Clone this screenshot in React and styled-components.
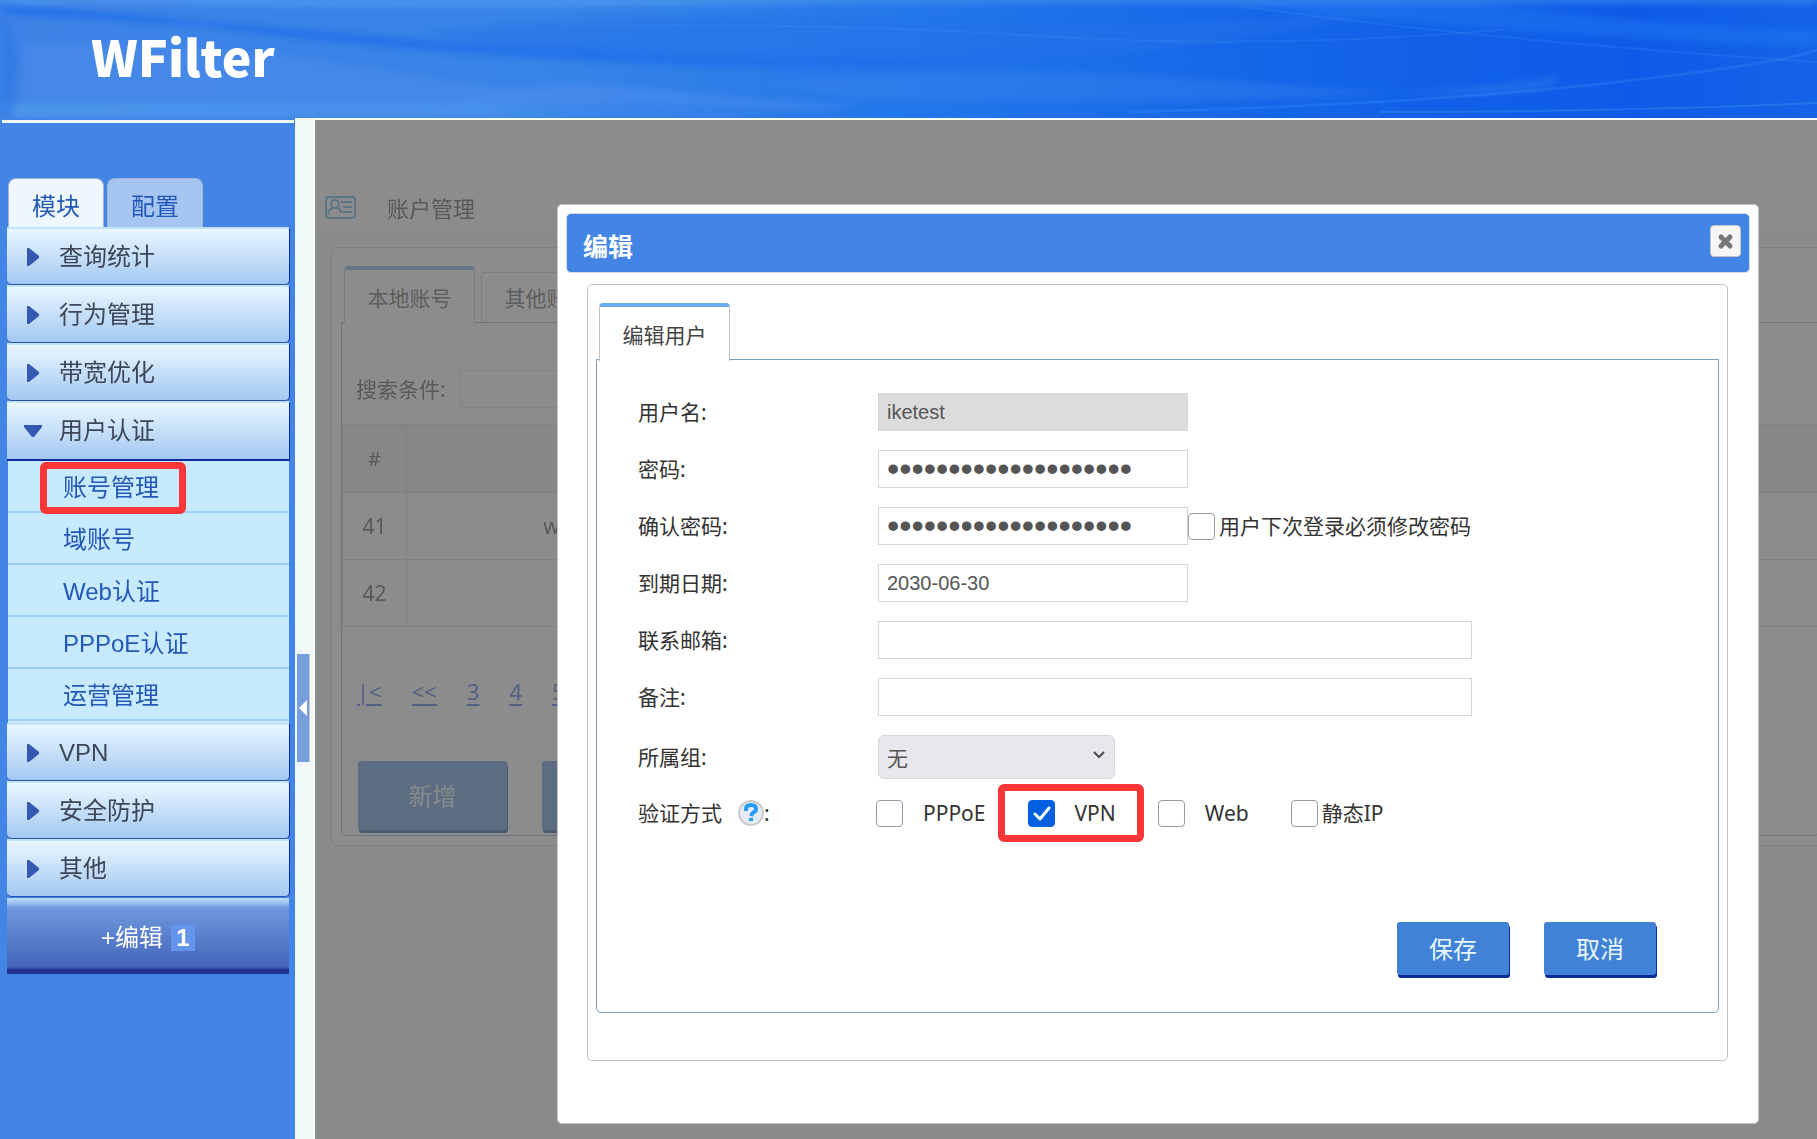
import { useState } from "react";
import styled, { createGlobalStyle } from "styled-components";

const GlobalStyle = createGlobalStyle`
    * {
        box-sizing: border-box;
    }
    body {
        margin: 0;
        background-color: #ffffff;
        color: #333333;
        font-family: "Noto Sans", "Noto Sans CJK SC", sans-serif;
        font-size: 21px;
        line-height: 30px;
    }
    button, input, select {
        margin: 0;
        font-family: inherit;
    }
`;

const Page = styled.div`
    display: flex;
    flex-direction: column;
    min-height: 100vh;
`;

const Header = styled.header`
    display: grid;
    height: 118px;
    > * {
        grid-area: 1 / 1;
    }
`;

const HeaderArt = styled.svg`
    display: block;
    width: 100%;
    height: 118px;
`;

const Logo = styled.h1`
    margin: 0;
    padding: 23px 0 0 91px;
    color: #ffffff;
    font-family: "Noto Sans CJK SC", sans-serif;
    font-size: 50px;
    font-weight: 900;
    line-height: 64px;
`;

const Body = styled.div`
    display: flex;
    flex: 1;
`;

const Sidebar = styled.aside`
    flex: none;
    width: 295px;
    padding-top: 2px;
    background-color: #4285e4;
`;

const SidebarRule = styled.div`
    height: 3px;
    margin: 0 1px 55px 2px;
    background-color: #f0faf8;
`;

const SideTabs = styled.div`
    display: flex;
    gap: 3px;
    padding-left: 8px;
`;

const SideTab = styled.button`
    width: 96px;
    height: 49px;
    padding: 6px 0 0;
    border: 1px solid #a3b6d6;
    border-bottom: 0;
    border-radius: 8px 8px 0 0;
    background-color: ${({ $active }) => ($active ? "#eef6fe" : "#a6c6f1")};
    color: #2458b8;
    font-size: 24px;
    line-height: 36px;
`;

const Menu = styled.nav`
    width: 283px;
    margin-left: 7px;
    font-family: "Liberation Sans", "Noto Sans CJK SC", sans-serif;
`;

const MenuItem = styled.button`
    display: grid;
    grid-template-columns: 36px 1fr;
    align-items: center;
    width: 100%;
    height: ${({ $open }) => ($open ? 60 : 58)}px;
    padding: 0 0 0 16px;
    border: 0;
    border-top: 2px solid #c2e3fc;
    border-right: 1px solid #0b2c9a;
    border-bottom: ${({ $open }) => ($open ? "2px solid #0b2c9a" : "1px solid #2c50b0")};
    border-radius: ${({ $open }) => ($open ? "0" : "0 3px 5px 5px")};
    background: linear-gradient(#e9f7ff, #a3c8f2);
    color: #3d4757;
    font-size: 24px;
    line-height: 36px;
    text-align: left;
`;

const SubMenu = styled.ul`
    margin: 0 1px;
    padding: 0 0 2px;
    list-style: none;
    background-color: #c8eaff;
`;

const SubItem = styled.li`
    position: relative;
    height: 52px;
    border-bottom: 2px solid #a0d0f8;
`;

const SubLink = styled.a`
    display: block;
    padding-left: 55px;
    color: #2458b8;
    font-size: 24px;
    line-height: 54px;
    text-decoration: none;
`;

/* red frame lying over the part it points at */
const Marker = styled.span`
    position: absolute;
    inset: ${({ $inset }) => $inset};
    border: 7px solid #fc3636;
    border-radius: 6px;
    pointer-events: none;
`;

const EditMenu = styled.button`
    display: flex;
    align-items: center;
    justify-content: center;
    gap: 8px;
    width: 282px;
    height: 76px;
    margin-top: 1px;
    padding: 4px 0 0;
    border: 0;
    background: linear-gradient(#b9d9f5 0, #a5c9f0 4px, #6f99de 10px, #4364b8 69px, #22308f 72px, #22308f 100%);
    color: #ffffff;
    font-size: 24px;
    line-height: 26px;
`;

const Badge = styled.span`
    width: 24px;
    background-color: #6495ed;
    font-weight: 700;
`;

const Splitter = styled.div`
    flex: none;
    width: 20px;
    padding: 536px 0 0 2px;
    border-right: 1px solid #ffffff;
    background-color: #f0f9f7;
`;

const Collapse = styled.button`
    display: grid;
    place-items: center;
    width: 13px;
    height: 108px;
    padding: 0;
    border: 0;
    border-right: 1px solid #c4c4c8;
    background-color: #779fdc;
`;

const Main = styled.main`
    position: relative;
    flex: 1;
    min-width: 0;
    margin-top: 2px;
    overflow: hidden;
    background-color: #f0f9f7;
`;

const PageTitle = styled.h2`
    display: flex;
    align-items: center;
    gap: 31px;
    height: 111px;
    margin: 0;
    padding: 64px 0 0 10px;
    background-color: #ffffff;
    font-size: 22px;
    font-weight: 400;
`;

const Card = styled.section`
    margin: 16px -12px 0 16px;
    padding: 18px 9px 9px;
    border: 1px solid #cccccc;
    border-radius: 6px;
    background-color: #ffffff;
`;

const Tabs = styled.div`
    display: flex;
    align-items: flex-end;
    gap: 6px;
    padding-left: 3px;
`;

const Tab = styled.button`
    position: relative;
    width: 131px;
    height: ${({ $active }) => ($active ? 58 : 50)}px;
    margin-bottom: ${({ $active }) => ($active ? -2 : 0)}px;
    padding: ${({ $active }) => ($active ? "2px" : "0")} 0 0;
    border: 1px solid #c3c3c3;
    border-top: ${({ $active }) => ($active ? "4px solid #6aabf5" : "1px solid #c3c3c3")};
    border-bottom: 0;
    border-radius: 4px 4px 0 0;
    background-color: #ffffff;
    color: #444444;
    font-size: 21px;
    line-height: 30px;
`;

const Panel = styled.div`
    border: 1px solid #76a2c6;
    border-radius: 0 0 5px 5px;
`;

const SearchRow = styled.div`
    display: flex;
    align-items: center;
    gap: 14px;
    padding: 47px 14px 16px;
`;

const Input = styled.input`
    width: ${({ $wide }) => ($wide ? 594 : 310)}px;
    height: 38px;
    padding: 0 8px;
    border: 1px solid #d5d6d7;
    border-radius: 0;
    background-color: #ffffff;
    color: #555555;
    font-family: "Liberation Sans", "Noto Sans CJK SC", sans-serif;
    font-size: 20px;
    &:disabled {
        background-color: #dcdcdc;
    }
    &[type="password"] {
        font-size: 35px;
    }
`;

const Table = styled.table`
    width: 100%;
    border-collapse: collapse;
    table-layout: fixed;
    th, td {
        height: 67px;
        padding: 0;
        border: 1px solid #d4d4d4;
        font-weight: 400;
        text-align: center;
    }
    th {
        height: 68px;
        background-color: #ececec;
        font-size: 20px;
    }
    col:nth-child(1) {
        width: 64px;
    }
    col:nth-child(2) {
        width: 290px;
    }
`;

const Pager = styled.div`
    display: flex;
    gap: 30px;
    padding: 48px 15px 54px;
    a {
        color: #1450dc;
        font-size: 22px;
        line-height: 32px;
        text-underline-offset: 4px;
    }
`;

const ListActions = styled.div`
    display: flex;
    gap: 35px;
    padding: 0 16px 5px;
`;

const Button = styled.button`
    width: ${({ $large }) => ($large ? 149 : 112)}px;
    height: ${({ $large }) => ($large ? 69 : 53)}px;
    padding: 0;
    border: 0;
    border-radius: 3px;
    background-color: #4182d6;
    box-shadow: 1px 3px 0 #0a2c98;
    color: #e8f8ff;
    font-size: 24px;
    line-height: 36px;
`;

const Overlay = styled.div`
    position: absolute;
    inset: 0;
    background-color: rgba(102, 102, 102, 0.75);
`;

const Dialog = styled.div`
    position: absolute;
    top: 84px;
    left: 242px;
    right: 58px;
    padding: 8px 8px 62px;
    border: 1px solid #c3c3c3;
    border-radius: 5px;
    background-color: #ffffff;
`;

const DialogBar = styled.div`
    display: flex;
    align-items: center;
    justify-content: space-between;
    height: 60px;
    padding: 0 8px 0 16px;
    border: 1px solid #d2dcea;
    border-radius: 5px;
    background-color: #4285e4;
`;

const DialogTitle = styled.h3`
    margin: 0;
    padding-top: 6px;
    color: #ffffff;
    font-size: 25px;
    line-height: 36px;
`;

const Close = styled.button`
    display: grid;
    place-items: center;
    width: 31px;
    height: 32px;
    margin-bottom: 4px;
    padding: 0;
    border: 1px solid #c5c5c5;
    border-radius: 4px;
    background-color: #f6f6f6;
`;

const Group = styled.div`
    margin: 11px 22px 0 21px;
    padding: 18px 8px 47px;
    border: 1px solid #c3c3c3;
    border-radius: 5px;
`;

const Form = styled.form`
    display: flex;
    flex-direction: column;
    gap: 19px;
    padding: 33px 62px 37px 41px;
`;

const Row = styled.div`
    display: grid;
    grid-template-columns: 240px 1fr;
    align-items: center;
`;

const Field = styled.div`
    display: flex;
    align-items: center;
`;

const RowLabel = styled.span`
    display: flex;
    align-items: center;
    gap: ${({ $gap }) => $gap || 0}px;
`;

const SelectBox = styled.div`
    position: relative;
    width: 237px;
    svg {
        position: absolute;
        top: 15px;
        right: 9px;
        pointer-events: none;
    }
`;

const Select = styled.select`
    appearance: none;
    display: block;
    width: 100%;
    height: 44px;
    padding: 2px 8px 0;
    border: 1px solid #d6d6d8;
    border-radius: 6px;
    background-color: #e8e7ec;
    color: #555555;
    font-size: 21px;
    line-height: 30px;
`;

const Choices = styled.div`
    display: flex;
    gap: 42px;
    margin-left: -2px;
`;

const Choice = styled.label`
    position: relative;
    display: flex;
    align-items: center;
    gap: ${({ $tight }) => ($tight ? 4 : 20)}px;
`;

const TickBox = styled.span`
    display: grid;
    width: 27px;
    height: 27px;
    > * {
        grid-area: 1 / 1;
    }
    svg {
        pointer-events: none;
    }
    input {
        appearance: none;
        width: 27px;
        height: 27px;
        border: 1px solid #9b9aa8;
        border-radius: 4px;
        background-color: #ffffff;
    }
    input:checked {
        border-color: #0060df;
        background-color: #0060df;
    }
`;

const FormActions = styled.div`
    display: flex;
    justify-content: flex-end;
    gap: 35px;
    padding-top: 75px;
`;

const menu = [
    { name: "查询统计" },
    { name: "行为管理" },
    { name: "带宽优化" },
    { name: "用户认证", children: ["账号管理", "域账号", "Web认证", "PPPoE认证", "运营管理"] },
    { name: "VPN" },
    { name: "安全防护" },
    { name: "其他" },
];

const fields = [
    { id: "username", label: "用户名", value: "iketest", disabled: true },
    { id: "password", label: "密码", value: "12345678901234567890", type: "password" },
    { id: "confirm", label: "确认密码", value: "12345678901234567890", type: "password", mustChange: true },
    { id: "expire", label: "到期日期", value: "2030-06-30" },
    { id: "email", label: "联系邮箱", wide: true },
    { id: "memo", label: "备注", wide: true },
];

const Arrow = ({ open }) => (
    <svg width="20" height="20" viewBox="0 0 20 20">
        {open ? <path d="M1 4h18v2l-8 10H9L1 6z" fill="#3558b2" /> : <path d="M4 1h2l10 8v2L6 19H4z" fill="#3558b2" />}
    </svg>
);

const HeaderBackground = () => (
    <HeaderArt viewBox="0 0 1817 118" preserveAspectRatio="none" aria-hidden="true">
        <defs>
            <linearGradient id="sky">
                <stop offset="0" stopColor="#3f83e6" />
                <stop offset="0.3" stopColor="#3784e7" />
                <stop offset="0.5" stopColor="#2478ea" />
                <stop offset="0.7" stopColor="#1466e8" />
                <stop offset="0.9" stopColor="#0d5be8" />
                <stop offset="1" stopColor="#1464e8" />
            </linearGradient>
            <linearGradient id="edge">
                <stop offset="0" stopColor="#4c95ea" />
                <stop offset="0.45" stopColor="#4790ea" />
                <stop offset="0.75" stopColor="#1a70ea" stopOpacity="0.2" />
                <stop offset="1" stopColor="#1a70ea" stopOpacity="0" />
            </linearGradient>
            <filter id="soft" x="-5%" y="-40%" width="110%" height="180%">
                <feGaussianBlur stdDeviation="3" />
            </filter>
        </defs>
        <rect width="1817" height="118" fill="url(#sky)" />
        <g filter="url(#soft)">
            <path d="M0 0H900Q500 14 60 2L0 12z" fill="#4a96ec" opacity="0.7" />
            <path d="M0 2Q200 22 380 36T760 56Q980 60 1200 34L1200 44Q980 76 700 66Q420 56 200 26L0 14z" fill="#1c6cea" opacity="0.7" />
            <path d="M420 34Q640 10 900 20T1400 8Q1200 60 900 62T600 54z" fill="#1f72ea" opacity="0.5" />
            <path d="M24 44Q200 40 330 62T640 104L400 103H20z" fill="#4889e8" opacity="0.8" />
            <path d="M450 102Q540 76 640 88T860 106L700 118H430z" fill="#4a8cec" opacity="0.7" />
            <path d="M0 103H700Q900 108 1080 118H0z" fill="url(#edge)" />
            <path d="M760 84Q1000 60 1280 84T1560 76Q1300 112 860 98z" fill="#3a86ee" opacity="0.35" />
            <path d="M1180 0H1460Q1640 26 1817 30V46Q1560 40 1180 0z" fill="#2f84f2" opacity="0.35" />
            <path d="M0 14L8 20Q24 40 12 118H0z" fill="#2e77e2" opacity="0.6" />
            <rect y="-2" width="1817" height="5" fill="#579ff0" opacity="0.6" />
        </g>
        <g fill="none" strokeLinecap="round">
            <path d="M560 26Q820 22 1040 36T1500 30" stroke="#3f8cf0" strokeWidth="2" opacity="0.25" />
            <path d="M1130 112Q1420 104 1600 84T1817 50" stroke="#3f95f6" strokeWidth="3" opacity="0.25" />
            <path d="M1240 6Q1480 40 1817 62" stroke="#3b8df5" strokeWidth="2" opacity="0.25" />
            <path d="M1380 112Q1620 112 1817 103" stroke="#3b9cf2" strokeWidth="2" opacity="0.35" />
        </g>
    </HeaderArt>
);

const CardIcon = () => (
    <svg width="31" height="23" viewBox="0 0 31 23" fill="none" stroke="#3fa3d6" strokeWidth="2">
        <rect x="1" y="1" width="29" height="21" rx="3" />
        <circle cx="10" cy="8" r="4" />
        <path d="M3 18q1-5 5-6M12 12q4 1 4 5M16 6h11M18 11h9M18 16h9" />
    </svg>
);

const HelpIcon = () => (
    <svg width="26" height="26" viewBox="0 0 26 26">
        <circle cx="13" cy="13" r="12" fill="#e6ebf3" stroke="#c9cbcf" strokeWidth="2" />
        <path d="M8 11V9q0-4 5-4t5 4q0 2-2 3t-3 4" fill="none" stroke="#259df4" strokeWidth="4" />
        <rect x="11" y="18" width="4" height="3" fill="#259df4" />
    </svg>
);

const Tick = ({ label, tight, checked, marked }) => {
    const [on, setOn] = useState(!!checked);
    return (
        <Choice $tight={tight}>
            <TickBox>
                <input type="checkbox" checked={on} onChange={() => setOn(!on)} />
                {on ? (
                    <svg width="27" height="27" viewBox="0 0 27 27" fill="none" stroke="#ffffff" strokeWidth="3" strokeLinecap="round" strokeLinejoin="round">
                        <path d="M7 14l5 5L21 8" />
                    </svg>
                ) : null}
            </TickBox>
            {label}
            {marked ? <Marker $inset="-14px -28px -14px -30px" /> : null}
        </Choice>
    );
};

const SideMenu = () => (
    <Sidebar>
        <SidebarRule />
        <SideTabs>
            <SideTab $active>模块</SideTab>
            <SideTab>配置</SideTab>
        </SideTabs>
        <Menu>
            {menu.map(({ name, children }) => (
                <div key={name}>
                    <MenuItem $open={!!children}>
                        <Arrow open={!!children} />
                        {name}
                    </MenuItem>
                    {children ? (
                        <SubMenu>
                            {children.map((child, idx) => (
                                <SubItem key={child}>
                                    <SubLink href="#">{child}</SubLink>
                                    {idx === 0 ? <Marker $inset="1px 103px -3px 32px" /> : null}
                                </SubItem>
                            ))}
                        </SubMenu>
                    ) : null}
                </div>
            ))}
            <EditMenu>
                +编辑 <Badge>1</Badge>
            </EditMenu>
        </Menu>
    </Sidebar>
);

const AccountList = () => (
    <>
        <PageTitle>
            <CardIcon />
            账户管理
        </PageTitle>
        <Card>
            <Tabs>
                <Tab $active>本地账号</Tab>
                <Tab>其他账号</Tab>
            </Tabs>
            <Panel>
                <SearchRow>
                    <label htmlFor="search">搜索条件:</label>
                    <Input id="search" />
                </SearchRow>
                <Table>
                    <colgroup>
                        <col />
                        <col />
                        <col />
                    </colgroup>
                    <thead>
                        <tr>
                            <th>#</th>
                            <th></th>
                            <th></th>
                        </tr>
                    </thead>
                    <tbody>
                        <tr>
                            <td>41</td>
                            <td>w</td>
                            <td></td>
                        </tr>
                        <tr>
                            <td>42</td>
                            <td></td>
                            <td></td>
                        </tr>
                    </tbody>
                </Table>
                <Pager>
                    {["|<", "<<", "3", "4", "5"].map((page) => (
                        <a key={page} href="#">{page}</a>
                    ))}
                </Pager>
                <ListActions>
                    <Button $large>新增</Button>
                    <Button $large aria-label="删除" />
                </ListActions>
            </Panel>
        </Card>
    </>
);

const EditDialog = () => (
    <Dialog role="dialog" aria-labelledby="dialogTitle">
        <DialogBar>
            <DialogTitle id="dialogTitle">编辑</DialogTitle>
            <Close aria-label="关闭">
                <svg width="17" height="17" viewBox="0 0 17 17" stroke="#777777" strokeWidth="5" strokeLinecap="round">
                    <path d="M4 4l9 9M13 4l-9 9" />
                </svg>
            </Close>
        </DialogBar>
        <Group>
            <Tabs>
                <Tab $active>编辑用户</Tab>
            </Tabs>
            <Panel>
                <Form onSubmit={(e) => e.preventDefault()}>
                    {fields.map(({ id, label, value, type, disabled, wide, mustChange }) => (
                        <Row key={id}>
                            <RowLabel as="label" htmlFor={id}>{label}:</RowLabel>
                            <Field>
                                <Input id={id} type={type || "text"} defaultValue={value} disabled={disabled} $wide={wide} />
                                {mustChange ? <Tick label="用户下次登录必须修改密码" tight /> : null}
                            </Field>
                        </Row>
                    ))}
                    <Row>
                        <RowLabel as="label" htmlFor="group">所属组:</RowLabel>
                        <SelectBox>
                            <Select id="group">
                                <option>无</option>
                            </Select>
                            <svg width="14" height="10" viewBox="0 0 14 10" fill="none" stroke="#4a4a50" strokeWidth="2">
                                <path d="M2 2l5 5 5-5" />
                            </svg>
                        </SelectBox>
                    </Row>
                    <Row>
                        <RowLabel>
                            <RowLabel as="span" $gap={16}>验证方式 <HelpIcon /></RowLabel>:
                        </RowLabel>
                        <Choices>
                            <Tick label="PPPoE" />
                            <Tick label="VPN" checked marked />
                            <Tick label="Web" />
                            <Tick label="静态IP" tight />
                        </Choices>
                    </Row>
                    <FormActions>
                        <Button type="submit">保存</Button>
                        <Button type="button">取消</Button>
                    </FormActions>
                </Form>
            </Panel>
        </Group>
    </Dialog>
);

function App() {
    return (
        <Page>
            <GlobalStyle />
            <Header>
                <HeaderBackground />
                <Logo>WFilter</Logo>
            </Header>
            <Body>
                <SideMenu />
                <Splitter>
                    <Collapse aria-label="收起菜单">
                        <svg width="8" height="16" viewBox="0 0 8 16">
                            <path d="M8 0v16L0 8z" fill="#ffffff" />
                        </svg>
                    </Collapse>
                </Splitter>
                <Main>
                    <AccountList />
                    <Overlay />
                    <EditDialog />
                </Main>
            </Body>
        </Page>
    );
}

export default App;
